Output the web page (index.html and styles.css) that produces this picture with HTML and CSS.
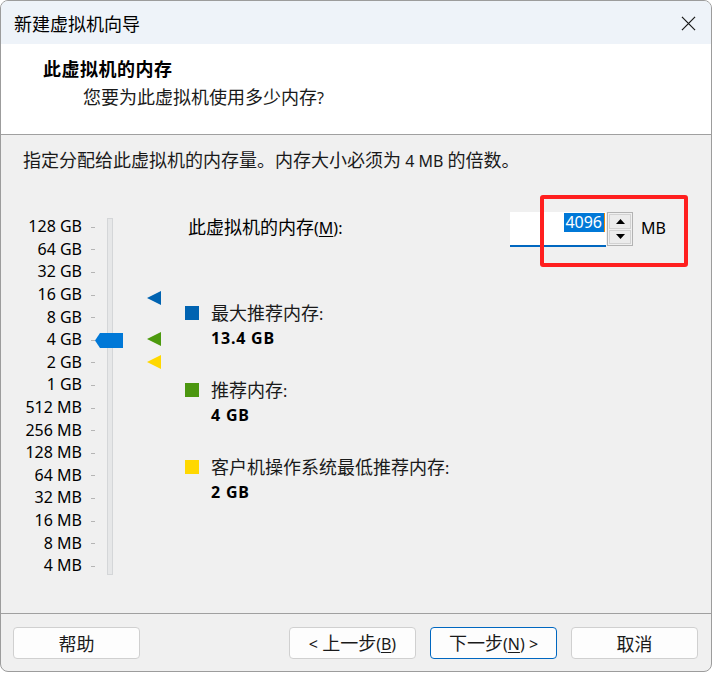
FILE: index.html
```html
<!DOCTYPE html>
<html lang="zh-CN">
<head>
<meta charset="utf-8">
<title>新建虚拟机向导</title>
<link rel="stylesheet" href="styles.css">
</head>
<body>
<div class="window">
  <div class="titlebar">
    <span class="title">新建虚拟机向导</span>
    <svg class="close" width="16" height="16" viewBox="0 0 16 16"><path d="M1 1 L15 15 M15 1 L1 15" stroke="#1a1a1a" stroke-width="1.3" fill="none"/></svg>
  </div>
  <div class="header">
    <div class="h-title">此虚拟机的内存</div>
    <div class="h-sub">您要为此虚拟机使用多少内存<span class="lat">?</span></div>
  </div>
  <div class="content">
    <div class="intro">指定分配给此虚拟机的内存量。内存大小必须为<span class="lat"> 4 MB </span>的倍数。</div>
    <div class="main">
      <div class="scale">
        <div class="row"><span class="lbl">128 GB</span><span class="tick"></span></div>
        <div class="row"><span class="lbl">64 GB</span><span class="tick"></span></div>
        <div class="row"><span class="lbl">32 GB</span><span class="tick"></span></div>
        <div class="row"><span class="lbl">16 GB</span><span class="tick"></span></div>
        <div class="row"><span class="lbl">8 GB</span><span class="tick"></span></div>
        <div class="row"><span class="lbl">4 GB</span><span class="tick"></span></div>
        <div class="row"><span class="lbl">2 GB</span><span class="tick"></span></div>
        <div class="row"><span class="lbl">1 GB</span><span class="tick"></span></div>
        <div class="row"><span class="lbl">512 MB</span><span class="tick"></span></div>
        <div class="row"><span class="lbl">256 MB</span><span class="tick"></span></div>
        <div class="row"><span class="lbl">128 MB</span><span class="tick"></span></div>
        <div class="row"><span class="lbl">64 MB</span><span class="tick"></span></div>
        <div class="row"><span class="lbl">32 MB</span><span class="tick"></span></div>
        <div class="row"><span class="lbl">16 MB</span><span class="tick"></span></div>
        <div class="row"><span class="lbl">8 MB</span><span class="tick"></span></div>
        <div class="row"><span class="lbl">4 MB</span><span class="tick"></span></div>
        <div class="track"></div>
        <svg class="thumb" width="28" height="15" viewBox="0 0 28 15"><polygon points="0,7.5 5,0 28,0 28,15 5,15" fill="#0078d7"/></svg>
        <svg class="marker m-max" width="14" height="14" viewBox="0 0 14 14"><polygon points="0,7 14,0 14,14" fill="#0063b1"/></svg>
        <svg class="marker m-rec" width="14" height="14" viewBox="0 0 14 14"><polygon points="0,7 14,0 14,14" fill="#4c9a0e"/></svg>
        <svg class="marker m-min" width="14" height="14" viewBox="0 0 14 14"><polygon points="0,7 14,0 14,14" fill="#ffd800"/></svg>
      </div>
      <div class="right">
        <div class="memrow">
          <span class="memlabel">此虚拟机的内存<span class="lat">(<u>M</u>):</span></span>
          <div class="input"><span class="sel">4096</span><span class="caret"></span></div>
          <div class="spin">
            <div class="spbtn"><svg width="9" height="5" viewBox="0 0 9 5"><polygon points="0,5 4.5,0 9,5" fill="#000"/></svg></div>
            <div class="spbtn"><svg width="9" height="5" viewBox="0 0 9 5"><polygon points="0,0 9,0 4.5,5" fill="#000"/></svg></div>
          </div>
          <span class="unit lat">MB</span>
        </div>
        <div class="legend">
          <div class="item">
            <div class="key"><span class="sq sq-blue"></span><span>最大推荐内存<span class="lat">:</span></span></div>
            <div class="val">13.4 GB</div>
          </div>
          <div class="item">
            <div class="key"><span class="sq sq-green"></span><span>推荐内存<span class="lat">:</span></span></div>
            <div class="val">4 GB</div>
          </div>
          <div class="item">
            <div class="key"><span class="sq sq-yellow"></span><span>客户机操作系统最低推荐内存<span class="lat">:</span></span></div>
            <div class="val">2 GB</div>
          </div>
        </div>
      </div>
    </div>
  </div>
  <div class="footer">
    <button class="btn"><span>帮助</span></button>
    <div class="spacer"></div>
    <button class="btn"><span><span class="lat">&lt;&nbsp;</span>上一步<span class="lat">(<u>B</u>)</span></span></button>
    <button class="btn btn-default"><span>下一步<span class="lat">(<u>N</u>)&nbsp;&gt;</span></span></button>
    <button class="btn"><span>取消</span></button>
  </div>
  <div class="highlight"></div>
</div>
</body>
</html>
```
FILE: styles.css
```css
* { box-sizing: border-box; }
html, body { margin: 0; padding: 0; background: #ffffff; }
body {
  font-family: "Noto Sans CJK SC", "Noto Sans", sans-serif;
  font-size: 18px;
  color: #1a1a1a;
}
.lat { font-family: "Noto Sans", "Noto Sans CJK SC", sans-serif; font-size: 16px; }

.window {
  position: relative;
  width: 712px;
  height: 672px;
  border: 1px solid #9c9c9c;
  border-radius: 8px;
  overflow: hidden;
  background: #f0f0f0;
  display: flex;
  flex-direction: column;
}

.titlebar {
  height: 43px;
  flex: none;
  background: #eef3f9;
  display: flex;
  align-items: center;
  justify-content: space-between;
  padding: 0 15px 0 13px;
}
.title { font-size: 18px; line-height: 24px; color: #000; }
.close { width: 15px; height: 15px; margin-top: 1px; }

.header {
  height: 90px;
  flex: none;
  background: #ffffff;
  padding: 12px 0 0 42px;
}
.h-title { font-weight: 700; font-size: 18px; line-height: 24px; color: #000; letter-spacing: 0.5px; }
.h-sub { margin: 4px 0 0 40px; line-height: 24px; color: #1a1a1a; }

.content {
  flex: 1;
  border-top: 1px solid #a0a0a0;
  padding: 12px 0 0 22px;
}
.intro { line-height: 24px; }

.main { display: flex; margin-top: 39px; }

.scale {
  position: relative;
  width: 140px;
  margin-top: 5px;
  flex: none;
}
.row { display: flex; align-items: center; height: 22.6px; }
.lbl {
  width: 59px;
  text-align: right;
  font-family: "Noto Sans", sans-serif;
  font-size: 16px;
  line-height: 22px;
  padding-bottom: 4px;
  color: #000;
  white-space: nowrap;
}
.tick { width: 4px; height: 1px; background: #b5b5b5; margin-left: 9px; margin-bottom: 2px; }
.track {
  position: absolute;
  left: 84px;
  top: 1px;
  width: 6px;
  height: 357px;
  background: #e6e7e8;
  border: 1px solid #d4d6d8;
}
.thumb { position: absolute; left: 72px; top: 116px; }
.marker { position: absolute; left: 124px; }
.m-max { top: 74px; }
.m-rec { top: 115px; }
.m-min { top: 138px; }

.right { flex: 1; }
.memrow { display: flex; align-items: center; height: 35px; }
.memlabel { width: 347px; padding-left: 25px; line-height: 24px; color: #000; padding-bottom: 5px; }
.memlabel u { text-underline-offset: 2px; }
.input {
  width: 96px;
  height: 35px;
  background: #ffffff;
  border-bottom: 2px solid #0067c0;
  display: flex;
  justify-content: flex-end;
  align-items: flex-start;
  padding: 1px 1px 0 0;
}
.sel {
  background: #0078d7;
  color: #ffffff;
  font-family: "Noto Sans", sans-serif;
  font-size: 16px;
  line-height: 19px;
  height: 19px;
  padding: 0 2px 0 1px;
}
.caret { width: 1px; height: 19px; background: #e8890c; }
.spin {
  width: 26px;
  height: 34px;
  margin-left: 1px;
  align-self: flex-start;
  border: 1px solid #b3b3b3;
  padding: 1px;
  display: flex;
  flex-direction: column;
  gap: 1px;
  background: #f0f0f0;
}
.spbtn {
  flex: 1;
  border: 1px solid #d2d2d2;
  background: #ececec;
  display: flex;
  align-items: center;
  justify-content: center;
}
.unit { margin-left: 8px; color: #000; line-height: 24px; padding-bottom: 3px; }

.legend { margin: 53px 0 0 22px; display: flex; flex-direction: column; gap: 27px; }
.key { display: flex; align-items: center; line-height: 24px; }
.sq { width: 14px; height: 14px; margin-right: 12px; flex: none; }
.sq-blue { background: #0063b1; }
.sq-green { background: #4b960f; }
.sq-yellow { background: #ffd800; }
.val {
  margin-left: 26px;
  font-family: "Noto Sans", sans-serif;
  font-size: 16px;
  font-weight: 700;
  line-height: 24px;
  color: #000;
  letter-spacing: 0.8px;
}

.footer {
  height: 58px;
  flex: none;
  border-top: 1px solid #a0a0a0;
  display: flex;
  align-items: flex-start;
  padding: 13px 13px 0 12px;
  gap: 14px;
}
.spacer { flex: 1; }
.btn {
  width: 127px;
  height: 32px;
  border: 1px solid #d0d0d0;
  border-radius: 4px;
  background: #fdfdfd;
  font-family: "Noto Sans CJK SC", "Noto Sans", sans-serif;
  font-size: 18px;
  line-height: 24px;
  color: #1a1a1a;
  padding: 0;
  display: flex;
  align-items: center;
  justify-content: center;
}
.btn u { text-underline-offset: 2px; }
.btn-default { border-color: #0067c0; }

.highlight {
  position: absolute;
  left: 539px;
  top: 194px;
  width: 148px;
  height: 72px;
  border: 4px solid #ff1f1f;
  border-radius: 3px;
}
```
